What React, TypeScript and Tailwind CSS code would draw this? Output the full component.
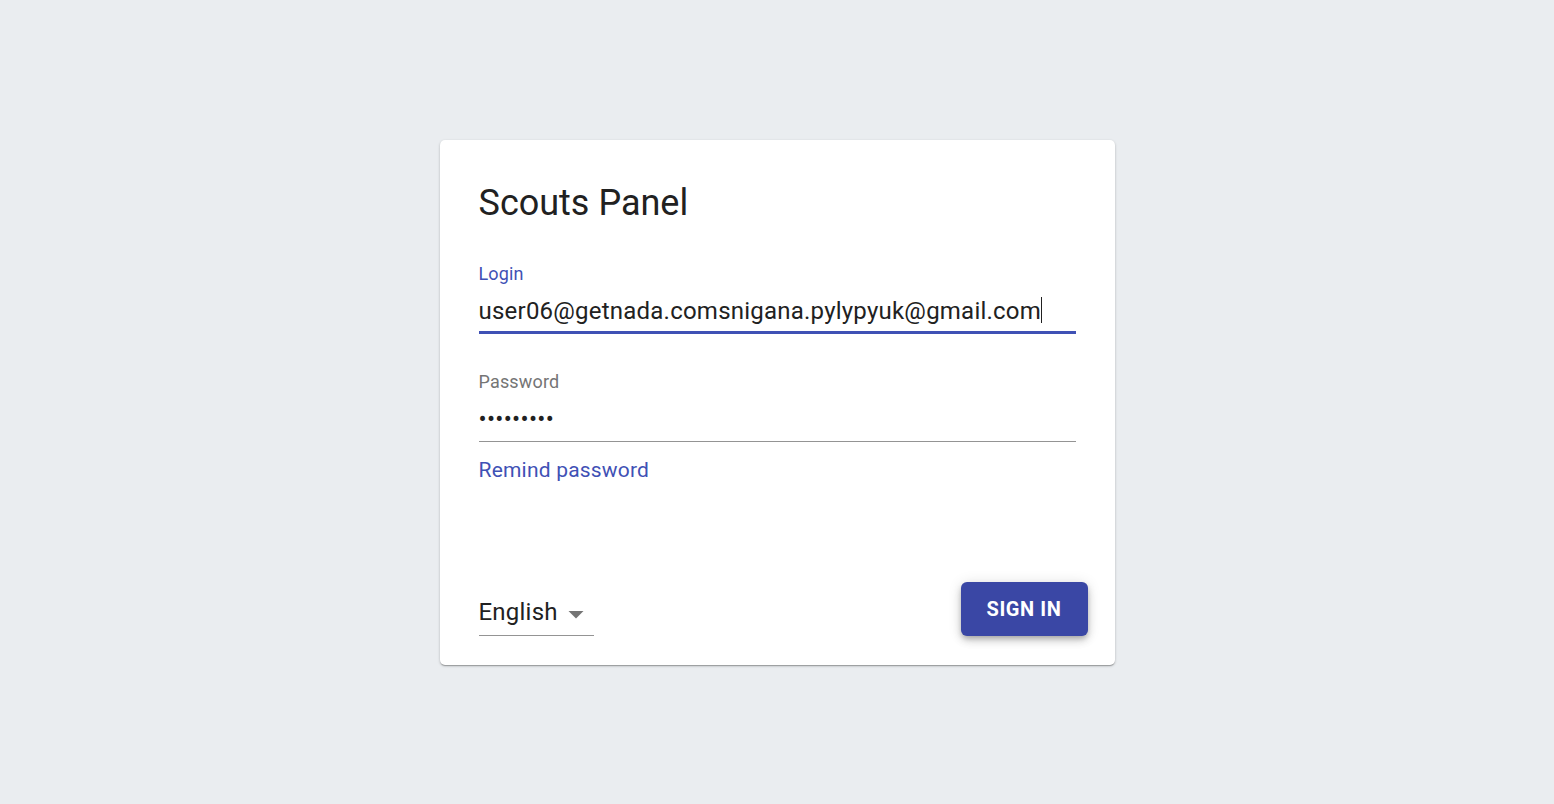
import { useState } from 'react';

function DropArrow() {
  return (
    <svg width="36" height="36" viewBox="0 0 24 24" className="fill-[#757575]">
      <path d="M7 10l5 5 5-5z" />
    </svg>
  );
}

export default function App() {
  const [login] = useState('user06@getnada.comsnigana.pylypyuk@gmail.com');
  const [language] = useState('English');

  return (
    <div className="min-h-screen w-full bg-[#eaedf0] flex justify-center font-['Roboto',sans-serif] text-[#212121]">
      <div className="mt-[140px] w-[675px] h-[525px] bg-white rounded-[5px] shadow-[0_1px_3px_rgba(0,0,0,0.2),0_1px_1px_rgba(0,0,0,0.14),0_2px_1px_-1px_rgba(0,0,0,0.12)] flex flex-col">
        <div className="px-[39px] pt-[45px]">
          <h1 className="text-[36px] leading-[36px] font-normal">Scouts Panel</h1>

          <div className="mt-[44px]">
            <label className="block text-[18px] leading-[18px] tracking-[0.17px] text-[#3f51b5]">Login</label>
            <div className="mt-[16px] pb-[8px] border-b-[3px] border-[#3f51b5] flex items-end">
              <span className="text-[24px] leading-[24px] tracking-[0.225px]">{login}</span>
              <span className="inline-block w-px h-[26px] -mt-[2px] bg-[#212121]" />
            </div>
          </div>

          <div className="mt-[39px]">
            <label className="block text-[18px] leading-[18px] tracking-[0.17px] text-[#757575]">Password</label>
            <div className="mt-[16px] pb-[7px] border-b border-[#949494]">
              <span className="text-[24px] leading-[24px] tracking-[0.3px]">•••••••••</span>
            </div>
          </div>

          <a href="#" className="block mt-[18px] text-[21px] leading-[21px] tracking-[0.2px] text-[#3f51b5]">
            Remind password
          </a>
        </div>

        <div className="mt-auto pl-[39px] pr-[27px] pb-[29px] flex items-end justify-between">
          <div className="relative w-[115px] pb-[8px] border-b border-[#949494]">
            <span className="text-[24px] leading-[24px] tracking-[0.225px]">{language}</span>
            <span className="absolute right-0 top-[-4px]">
              <DropArrow />
            </span>
          </div>
          <button className="w-[127px] h-[54px] rounded-[6px] bg-[#3a47a5] text-white text-[20px] font-bold tracking-[0.6px] uppercase shadow-[0_3px_5px_-1px_rgba(0,0,0,0.2),0_5px_8px_0_rgba(0,0,0,0.14),0_1px_14px_0_rgba(0,0,0,0.12)]">
            Sign in
          </button>
        </div>
      </div>
    </div>
  );
}
